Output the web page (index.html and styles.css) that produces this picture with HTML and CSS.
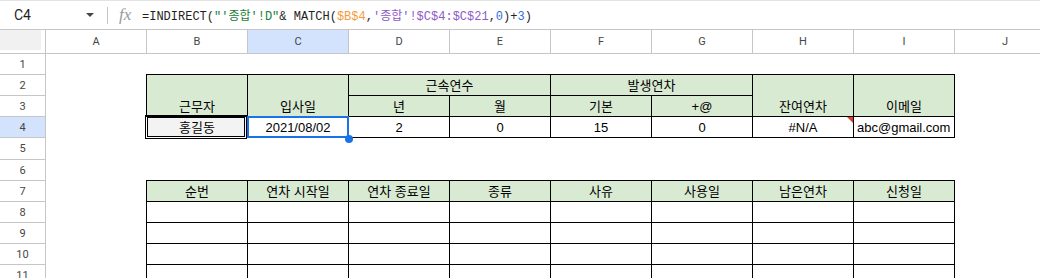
FILE: index.html
```html
<!DOCTYPE html>
<html lang="ko">
<head>
  <meta charset="UTF-8">
  <meta name="viewport" content="width=device-width, initial-scale=1.0">
  <title>연차 관리</title>
  <link rel="stylesheet" href="styles.css">
</head>
<body>
  <div class="formula-bar">
    <div class="name-box">C4</div>
    <span class="caret"></span>
    <span class="divider"></span>
    <span class="fx">fx</span>
    <div class="formula">=INDIRECT(<span class="str">"'종합'!D"</span>& MATCH(<span class="ref1">$B$4</span>,<span class="ref2">'종합'!$C$4:$C$21</span>,<span class="num">0</span>)+<span class="num">3</span>)</div>
  </div>

  <div class="sheet">
    <!-- 열 머리글 -->
    <div class="corner"></div>
    <div class="ch">A</div>
    <div class="ch">B</div>
    <div class="ch sel">C</div>
    <div class="ch">D</div>
    <div class="ch">E</div>
    <div class="ch">F</div>
    <div class="ch">G</div>
    <div class="ch">H</div>
    <div class="ch">I</div>
    <div class="ch">J</div>

    <!-- 1행 -->
    <div class="rh">1</div>
    <div></div><div></div><div></div><div></div><div></div>
    <div></div><div></div><div></div><div></div><div></div>

    <!-- 2행 -->
    <div class="rh">2</div>
    <div></div>
    <div class="hd r2">근무자</div>
    <div class="hd r2">입사일</div>
    <div class="hd c2">근속연수</div>
    <div class="hd c2">발생연차</div>
    <div class="hd r2">잔여연차</div>
    <div class="hd r2">이메일</div>
    <div></div>

    <!-- 3행 -->
    <div class="rh">3</div>
    <div></div>
    <div class="hd">년</div>
    <div class="hd">월</div>
    <div class="hd">기본</div>
    <div class="hd">+@</div>
    <div></div>

    <!-- 4행 -->
    <div class="rh sel">4</div>
    <div></div>
    <div class="name">홍길동</div>
    <div class="td cur">2021/08/02</div>
    <div class="td">2</div>
    <div class="td">0</div>
    <div class="td">15</div>
    <div class="td">0</div>
    <div class="td err">#N/A</div>
    <div class="td left">abc@gmail.com</div>
    <div></div>

    <!-- 5행 -->
    <div class="rh">5</div>
    <div></div><div></div><div></div><div></div><div></div>
    <div></div><div></div><div></div><div></div><div></div>

    <!-- 6행 -->
    <div class="rh">6</div>
    <div></div><div></div><div></div><div></div><div></div>
    <div></div><div></div><div></div><div></div><div></div>

    <!-- 7행: 사용 내역 머리글 -->
    <div class="rh">7</div>
    <div></div>
    <div class="hd">순번</div>
    <div class="hd">연차 시작일</div>
    <div class="hd">연차 종료일</div>
    <div class="hd">종류</div>
    <div class="hd">사유</div>
    <div class="hd">사용일</div>
    <div class="hd">남은연차</div>
    <div class="hd">신청일</div>
    <div></div>

    <!-- 8~11행 -->
    <div class="rh">8</div>
    <div></div>
    <div class="td"></div><div class="td"></div><div class="td"></div><div class="td"></div>
    <div class="td"></div><div class="td"></div><div class="td"></div><div class="td"></div>
    <div></div>

    <div class="rh">9</div>
    <div></div>
    <div class="td"></div><div class="td"></div><div class="td"></div><div class="td"></div>
    <div class="td"></div><div class="td"></div><div class="td"></div><div class="td"></div>
    <div></div>

    <div class="rh">10</div>
    <div></div>
    <div class="td"></div><div class="td"></div><div class="td"></div><div class="td"></div>
    <div class="td"></div><div class="td"></div><div class="td"></div><div class="td"></div>
    <div></div>

    <div class="rh">11</div>
    <div></div>
    <div class="td"></div><div class="td"></div><div class="td"></div><div class="td"></div>
    <div class="td"></div><div class="td"></div><div class="td"></div><div class="td"></div>
    <div></div>
  </div>
</body>
</html>
```

FILE: styles.css
```css
body {
  margin: 0;
  font-family: "Liberation Sans", Arial, "Noto Sans CJK KR", sans-serif;
  font-size: 13px;
  color: #000;
  background-color: #fff;
  overflow: hidden;
}

/* 수식 입력줄 */
.formula-bar {
  display: flex;
  align-items: center;
  height: 28px;
  border-top: 1px solid #e3e3e3;
  border-bottom: 1px solid #c4c7c5;
}
.name-box {
  width: 72px;
  padding-left: 14px;
  font-family: Roboto, "Liberation Sans", sans-serif;
  font-size: 14px;
  color: #1f1f1f;
}
.caret {
  width: 0;
  height: 0;
  border-left: 4px solid transparent;
  border-right: 4px solid transparent;
  border-top: 4px solid #444746;
  margin-right: 13px;
}
.divider {
  width: 1px;
  height: 17px;
  background-color: #c4c7c5;
  margin-right: 11px;
}
.fx {
  width: 23px;
  font-family: "Liberation Serif", serif;
  font-style: italic;
  font-size: 17px;
  color: #9a9a9a;
}
.formula {
  font-family: "Liberation Mono", "Noto Sans CJK KR", monospace;
  font-size: 12px;
  color: #1f1f1f;
  white-space: pre;
}
.formula .str { color: #188038; }
.formula .ref1 { color: #f39c3c; }
.formula .ref2 { color: #8e5bc7; }
.formula .num { color: #2f6fdc; }

/* 시트 격자 */
.sheet {
  display: grid;
  grid-template-columns: 45px repeat(10, 100px);
  grid-template-rows: 23px repeat(4, 20px) 21px repeat(6, 20px);
  gap: 1px;
}
.sheet > div {
  box-sizing: border-box;
  display: flex;
  align-items: flex-end;
  justify-content: center;
  padding: 0 3px 1px;
  line-height: 17px;
  white-space: nowrap;
}

.corner {
  background-color: #f1f1f1;
  box-shadow: 1px 0 0 #c4c7c5, 0 1px 0 #c4c7c5, 1px 1px 0 #c4c7c5, inset -4px -3px 0 #fff;
}
.sheet > .ch,
.sheet > .rh {
  align-items: center;
  padding: 0;
  font-family: Roboto, "Liberation Sans", sans-serif;
  font-size: 11px;
  color: #444746;
  box-shadow: 1px 0 0 #c4c7c5, 0 1px 0 #c4c7c5, 1px 1px 0 #c4c7c5;
}
.sheet > .sel {
  background-color: #d3e3fd;
}

/* 표 셀 */
.hd {
  background-color: #d9ead3;
  box-shadow: 0 0 0 1px #000;
}
.td {
  box-shadow: 0 0 0 1px #000;
}
.r2 { grid-row: span 2; }
.c2 { grid-column: span 2; }
.sheet > .left { justify-content: flex-start; }

.name {
  position: relative;
  background-color: #f3f3f3;
}
.name::before {
  content: "";
  position: absolute;
  top: -2px;
  left: -2px;
  right: 0;
  bottom: -2px;
  border: 3px double #000;
}

/* 선택된 셀 */
.cur {
  position: relative;
}
.cur::before {
  content: "";
  position: absolute;
  top: -1px;
  left: -1px;
  right: -1px;
  bottom: -1px;
  border: 2px solid #1a73e8;
  z-index: 2;
}
.cur::after {
  content: "";
  position: absolute;
  right: -5px;
  bottom: -6px;
  width: 8px;
  height: 8px;
  border-radius: 50%;
  background-color: #1a73e8;
  z-index: 3;
}

/* 오류 표시 */
.err {
  position: relative;
}
.err::after {
  content: "";
  position: absolute;
  top: 0;
  right: 0;
  width: 0;
  height: 0;
  border-top: 6px solid #e0412f;
  border-left: 6px solid transparent;
}
```
